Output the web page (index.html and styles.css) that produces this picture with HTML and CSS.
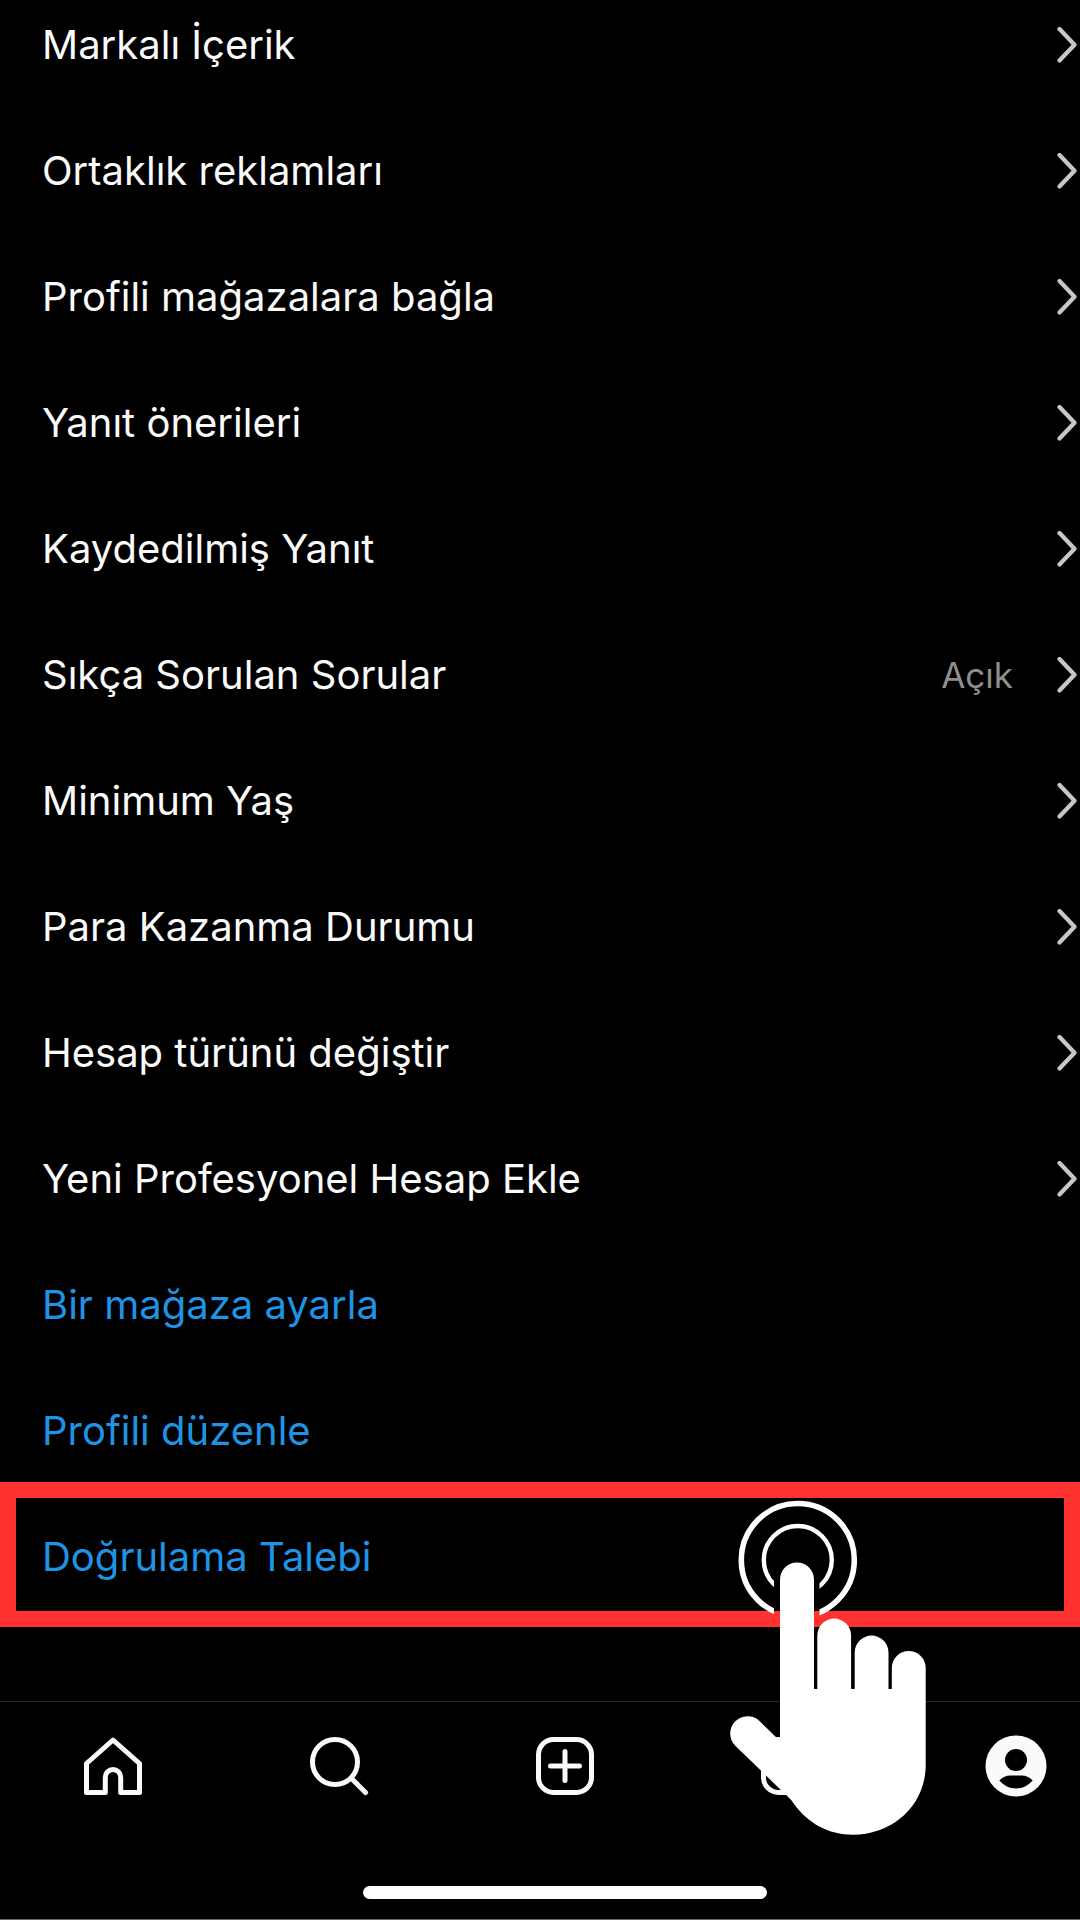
FILE: index.html
```html
<!DOCTYPE html>
<html lang="tr">
<head>
<meta charset="utf-8">
<meta name="viewport" content="width=device-width, initial-scale=1">
<title>Ayarlar</title>
<link rel="stylesheet" href="styles.css">
</head>
<body>
<svg class="sprite" aria-hidden="true">
  <symbol id="chevron" viewBox="0 0 22 36"><path d="M3.500 2 18.500 17.700 3.500 33.500" fill="none" stroke="currentColor" stroke-width="4.200" stroke-linecap="round" stroke-linejoin="round"/></symbol>
</svg>
<main class="content">
  <ul class="list">
    <li><a class="row" href="#">Markalı İçerik<svg class="chevron"><use href="#chevron"/></svg></a></li>
    <li><a class="row" href="#">Ortaklık reklamları<svg class="chevron"><use href="#chevron"/></svg></a></li>
    <li><a class="row" href="#">Profili mağazalara bağla<svg class="chevron"><use href="#chevron"/></svg></a></li>
    <li><a class="row" href="#">Yanıt önerileri<svg class="chevron"><use href="#chevron"/></svg></a></li>
    <li><a class="row" href="#">Kaydedilmiş Yanıt<svg class="chevron"><use href="#chevron"/></svg></a></li>
    <li><a class="row" href="#">Sıkça Sorulan Sorular<span class="value">Açık</span><svg class="chevron"><use href="#chevron"/></svg></a></li>
    <li><a class="row" href="#">Minimum Yaş<svg class="chevron"><use href="#chevron"/></svg></a></li>
    <li><a class="row" href="#">Para Kazanma Durumu<svg class="chevron"><use href="#chevron"/></svg></a></li>
    <li><a class="row" href="#">Hesap türünü değiştir<svg class="chevron"><use href="#chevron"/></svg></a></li>
    <li><a class="row" href="#">Yeni Profesyonel Hesap Ekle<svg class="chevron"><use href="#chevron"/></svg></a></li>
    <li><a class="row action" href="#">Bir mağaza ayarla</a></li>
    <li><a class="row action" href="#">Profili düzenle</a></li>
    <li class="highlighted">
      <a class="row action" href="#">Doğrulama Talebi</a>
      <svg class="hand" viewBox="0 0 196 336" aria-hidden="true">
        <defs><clipPath id="rings"><path d="M0 0H196V336H89.500V70H44V336H0Z"/></clipPath></defs>
        <g fill="none" stroke="#fff" clip-path="url(#rings)">
          <circle cx="67.800" cy="60" r="56.500" stroke-width="5.600"/>
          <circle cx="67.800" cy="60" r="34" stroke-width="4.400"/>
        </g>
        <path fill="#fff" d="M50 79.500a17 17 0 0 1 34 0V189h3.300V135.500a16.900 16.900 0 0 1 33.800 0V189h3.600V152.500a16.900 16.900 0 0 1 33.800 0V189h3.300V168a16.900 16.900 0 0 1 33.900 0V265C195.700 305 163 334.700 123 334.700C98 334.700 78 323 64 304C61 299 57 296 53 292L5.500 246A17.300 17.300 0 0 1 29.500 221L50 241Z"/>
      </svg>
    </li>
  </ul>
</main>
<footer class="footer">
  <nav class="tabs">
    <a class="tab" href="#" aria-label="Ana sayfa"><svg viewBox="0 0 62 62" fill="none" stroke="currentColor" stroke-width="5" stroke-linejoin="round"><path d="M4.500 57.500V28.500L31 5 57.500 28.500V57.500H38.700V42.200a7.700 7.700 0 0 0-15.400 0V57.500Z"/></svg></a>
    <a class="tab" href="#" aria-label="Ara"><svg viewBox="0 0 62 62" fill="none" stroke="currentColor" stroke-width="5" stroke-linecap="round"><circle cx="27" cy="27" r="22.500"/><path d="M43.500 43.500 57.500 57.500"/></svg></a>
    <a class="tab" href="#" aria-label="Oluştur"><svg viewBox="0 0 62 62" fill="none" stroke="currentColor" stroke-width="5" stroke-linecap="round"><rect x="4.500" y="4.500" width="53" height="53" rx="15"/><path d="M31 16.500V45.500M16.500 31H45.500"/></svg></a>
    <a class="tab" href="#" aria-label="Reels"><svg viewBox="0 0 62 62" fill="none" stroke="currentColor" stroke-width="5" stroke-linejoin="round"><rect x="4.500" y="4.500" width="53" height="53" rx="15"/><path d="M5 20H57M20 5 29 20M36 5 45 20M25 29V48L42 38.500Z"/></svg></a>
    <a class="tab" href="#" aria-label="Profil"><svg viewBox="0 0 62 62"><circle cx="31" cy="31" r="30.500" fill="currentColor"/><circle cx="31" cy="25" r="11" fill="#000"/><path d="M14.300 45.500Q19 40.500 25 40.500H37Q43 40.500 47.700 45.500Q40.500 53.500 31 53.500Q21.500 53.500 14.300 45.500Z" fill="#000"/></svg></a>
  </nav>
  <div class="home-indicator"></div>
</footer>
</body>
</html>
```
FILE: styles.css
```css
* {
  box-sizing: border-box;
}

body {
  display: flex;
  flex-direction: column;
  min-height: 100vh;
  margin: 0;
  background: #000;
  color: #fafafa;
  font-family: Inter, "Noto Sans", sans-serif;
  overflow-x: hidden;
}

a {
  color: inherit;
  text-decoration: none;
}

.sprite {
  position: absolute;
  width: 0;
  height: 0;
}

.content {
  flex: 1;
}

.list {
  display: flex;
  flex-direction: column;
  gap: 76px;
  margin: 0;
  padding: 20px 0 76px;
  list-style: none;
}

.row {
  display: flex;
  align-items: center;
  padding: 0 2px 0 42px;
  font-size: 40px;
  line-height: 50px;
}

.row.action {
  color: #1f93e4;
}

.value {
  margin-left: auto;
  color: #8e8e8e;
  font-size: 35px;
}

.chevron {
  flex: none;
  width: 22px;
  height: 36px;
  margin-left: auto;
  color: #c8c8c8;
}

.value + .chevron {
  margin-left: 43px;
}

.highlighted {
  position: relative;
}

.highlighted::before {
  content: "";
  position: absolute;
  inset: -50px 0 -45px;
  border: 16px solid #ff3131;
  pointer-events: none;
}

.hand {
  position: absolute;
  top: -32px;
  right: 154px;
  z-index: 1;
  width: 196px;
  height: 336px;
  pointer-events: none;
}

.footer {
  padding-bottom: 20px;
  border-top: 1px solid #262626;
  border-bottom: 1px solid #706a6a;
}

.tabs {
  display: flex;
  justify-content: space-between;
  padding: 33px 33px 89px 82px;
}

.tab,
.tab svg {
  display: block;
  width: 62px;
  height: 62px;
}

.home-indicator {
  width: 404px;
  height: 13px;
  margin-left: calc(50% - 177px);
  border-radius: 7px;
  background: #fff;
}
```
